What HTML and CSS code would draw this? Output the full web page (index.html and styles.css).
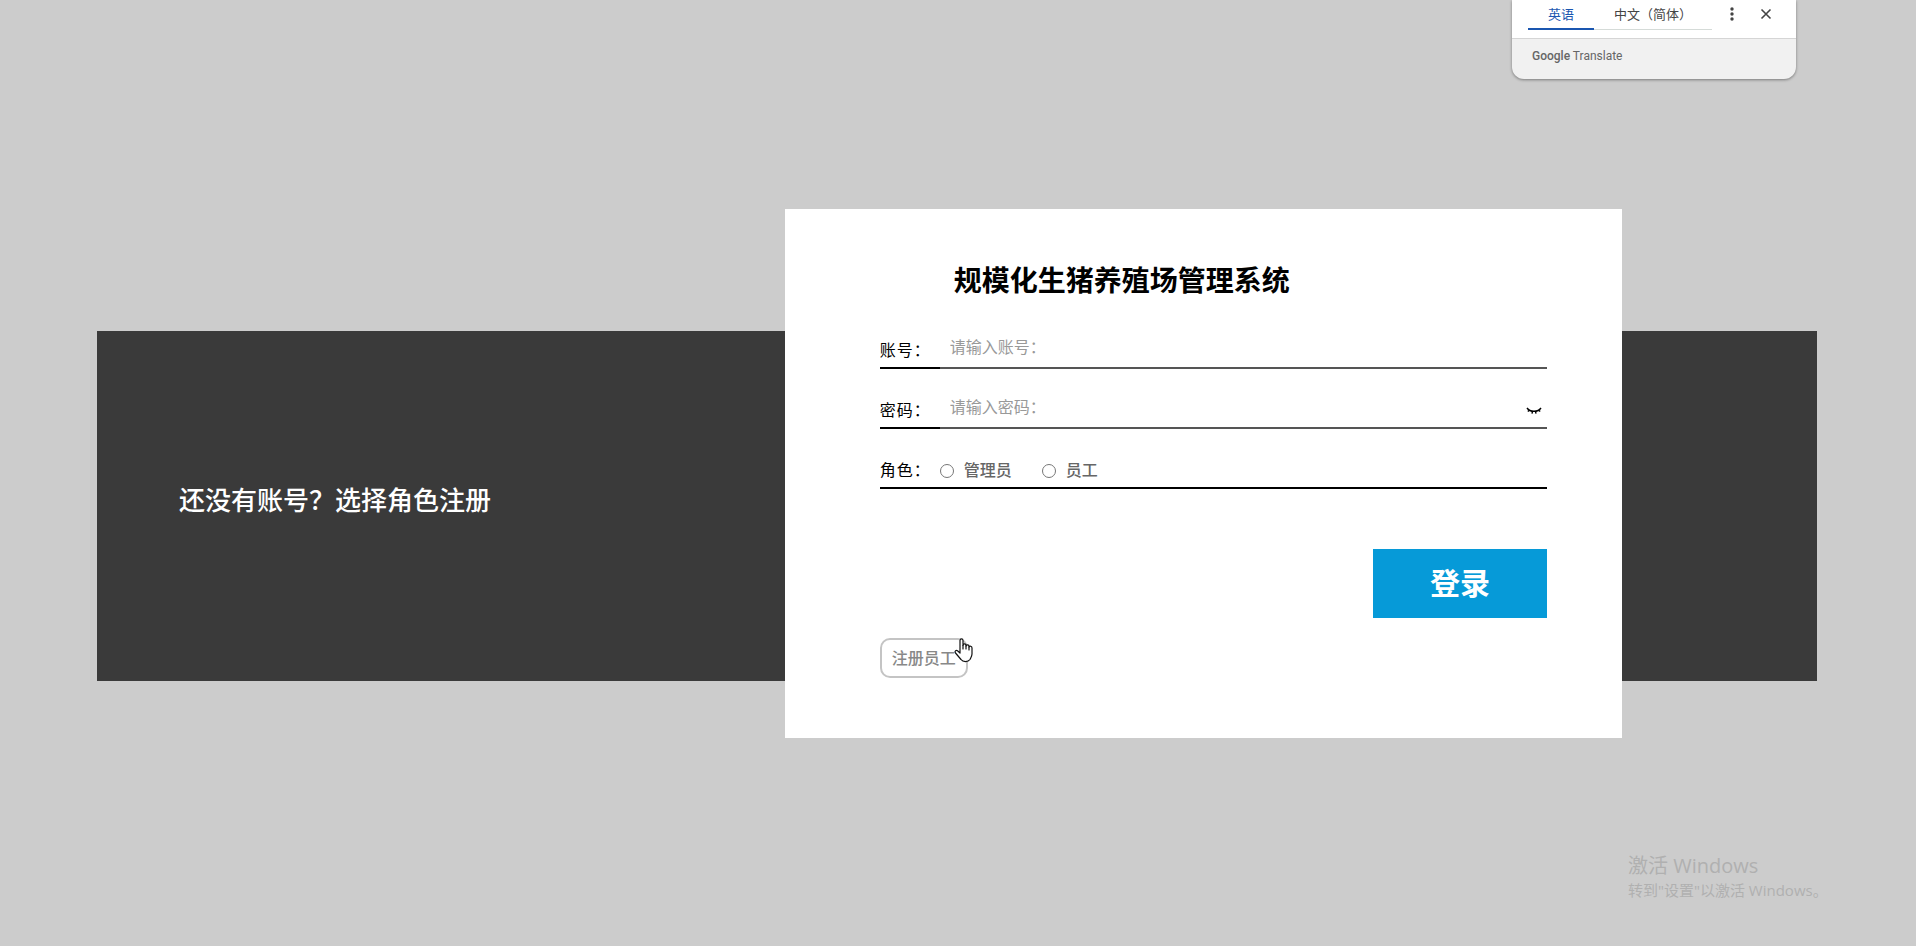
FILE: index.html
```html
<!DOCTYPE html>
<html lang="zh-CN">
<head>
  <meta charset="UTF-8">
  <meta name="viewport" content="width=device-width, initial-scale=1.0">
  <title>规模化生猪养殖场管理系统</title>
  <link rel="stylesheet" href="styles.css">
</head>
<body>
  <main class="container">
    <div class="register-tip">还没有账号？选择角色注册</div>

    <form class="login-form">
      <h1>规模化生猪养殖场管理系统</h1>

      <div class="form-item">
        <label class="label" for="username">账号：</label>
        <input class="text-input" type="text" id="username" placeholder="请输入账号：">
      </div>

      <div class="form-item">
        <label class="label" for="password">密码：</label>
        <input class="text-input" type="password" id="password" placeholder="请输入密码：">
        <button class="eye" type="button" aria-label="显示密码">
          <svg width="16" height="8" viewBox="0 0 16 8" fill="none" stroke="#000" stroke-width="1.4">
            <path d="M1 1C4 5.4 12 5.4 15 1M3.5 3L1.8 4.6M6.5 4.3L6 6.6M9.5 4.3L10 6.6M12.5 3L14.2 4.6"/>
          </svg>
        </button>
      </div>

      <div class="form-item role" role="radiogroup" aria-labelledby="role-label">
        <span class="label" id="role-label">角色：</span>
        <label class="radio"><input type="radio" name="role" value="admin">管理员</label>
        <label class="radio"><input type="radio" name="role" value="staff">员工</label>
      </div>

      <button class="login-btn" type="submit">登录</button>
      <div class="register">
        <button class="register-btn" type="button">注册员工</button>
        <svg class="cursor" width="20" height="25" viewBox="0 0 20 25" fill="#fff" stroke="#111" stroke-width="1.2" stroke-linejoin="round" stroke-linecap="round">
          <path d="M6 14V2.5C6 .3 9 .3 9 2.5V7.5C9.3 5.3 12 5.5 12 7.5V8C12.5 6.5 15 6.5 15 8.5V9C15.7 7.7 18 8 18 10V16C18 18 17 19.5 16 21.5C14 24.2 9 24.2 7 21.5L1.5 15C.3 13.3 2 11.8 3.5 12.8L6 15Z"/>
          <path d="M9 7.5V11M12 8V11M15 9V12"/>
        </svg>
      </div>
    </form>
  </main>

  <!-- 翻译弹窗 -->
  <aside class="translate">
    <div class="translate-top">
      <div class="tabs">
        <button class="tab active" type="button">英语</button>
        <button class="tab" type="button">中文（简体）</button>
      </div>
      <button class="icon-btn" type="button" aria-label="更多">
        <svg width="16" height="16" viewBox="0 0 16 16" fill="#444">
          <circle cx="8" cy="3" r="1.7"/><circle cx="8" cy="8" r="1.7"/><circle cx="8" cy="13" r="1.7"/>
        </svg>
      </button>
      <button class="icon-btn" type="button" aria-label="关闭">
        <svg width="16" height="16" viewBox="0 0 16 16" stroke="#444" stroke-width="1.6">
          <path d="M3.5 3.5L12.5 12.5M12.5 3.5L3.5 12.5"/>
        </svg>
      </button>
    </div>
    <div class="translate-foot"><b>Google</b> Translate</div>
  </aside>

  <div class="watermark">
    <div class="watermark-title">激活 Windows</div>
    <div>转到"设置"以激活 Windows。</div>
  </div>
</body>
</html>
```
FILE: styles.css
```css
* {
  box-sizing: border-box;
}
body {
  margin: 0;
  min-height: 100vh;
  background-color: #ccc;
  font-family: "Noto Sans CJK SC", sans-serif;
  font-size: 16px;
}
button, input {
  font-family: inherit;
}
button {
  padding: 0;
  border: none;
  background: none;
  cursor: pointer;
}
h1 {
  width: 484px;
  margin: 0 0 34px;
  font-size: 28px;
  line-height: 40px;
  text-align: center;
}
.container {
  display: grid;
  grid-template-columns: 45.1% 1fr;
  align-items: center;
  margin: 331px 99px 0 97px;
  padding-right: 195px;
  background-color: #3a3a3a;
}
.register-tip {
  padding: 0 0 15px 82px;
  color: #fff;
  font-size: 26px;
  line-height: 40px;
  font-weight: 500;
}
.login-form {
  display: flex;
  flex-direction: column;
  margin: -122px 0 -57px;
  padding: 50px 75px 60px 95px;
  background-color: #fff;
}
.form-item {
  display: flex;
  position: relative;
  height: 36px;
  margin-bottom: 24px;
}
.label {
  width: 60px;
  border-bottom: 2px solid #000;
  line-height: 32px;
  letter-spacing: 1px;
  white-space: nowrap;
}
.text-input {
  flex: 1;
  min-width: 0;
  padding: 0 40px 8px 10px;
  border: none;
  border-bottom: 2px solid #555;
  outline: none;
  font-size: 16px;
}
.text-input::placeholder {
  color: #999;
}
.eye {
  display: flex;
  position: absolute;
  right: 5px;
  bottom: 14px;
}
.role {
  border-bottom: 2px solid #000;
}
.role .label {
  border-bottom: none;
}
.radio {
  display: flex;
  align-items: center;
  margin-right: 30px;
  padding-bottom: 2px;
  color: #666;
  font-weight: 500;
}
.radio input {
  width: 14px;
  height: 14px;
  margin: 4px 10px 0 0;
}
.login-btn {
  align-self: flex-end;
  width: 174px;
  height: 69px;
  margin: 36px 0 20px;
  padding-bottom: 5px;
  background-color: #069ad8;
  color: #fff;
  font-size: 30px;
  font-weight: bold;
}
.register {
  position: relative;
  width: 88px;
  height: 40px;
}
.register-btn {
  width: 100%;
  height: 100%;
  padding-bottom: 3px;
  border: 2px solid #c4c4c4;
  border-radius: 10px;
  color: #888;
  font-size: 16px;
  font-weight: 500;
}
.cursor {
  position: absolute;
  top: 0;
  right: -6px;
}

.translate {
  position: absolute;
  top: 0;
  right: 120px;
  width: 284px;
  background-color: #f1f1f1;
  border-radius: 0 0 12px 12px;
  box-shadow: 0 1px 3px rgba(0,0,0,0.4);
  overflow: hidden;
}
.translate-top {
  display: flex;
  align-items: flex-start;
  height: 39px;
  padding-left: 16px;
  background-color: #fff;
  border-bottom: 1px solid #d5d5d5;
}
.tabs {
  display: flex;
  width: 184px;
  border-bottom: 1px solid #d5dbd8;
}
.tab {
  flex: 1;
  height: 29px;
  padding-bottom: 2px;
  color: #444;
  font-size: 13px;
  white-space: nowrap;
}
.tab.active {
  flex: 0 0 66px;
  margin-bottom: -1px;
  height: 30px;
  border-bottom: 2px solid #1a56b0;
  color: #1a56b0;
}
.icon-btn {
  display: flex;
  align-items: center;
  height: 28px;
  margin-left: 12px;
}
.icon-btn + .icon-btn {
  margin-left: 18px;
}
.translate-foot {
  height: 40px;
  padding: 7px 20px;
  color: #666;
  font-family: Roboto, sans-serif;
  font-size: 12px;
  line-height: 20px;
}
.translate-foot b {
  font-weight: 500;
}

.watermark {
  position: absolute;
  right: 93px;
  bottom: 44px;
  width: 195px;
  color: #b0b0b0;
  font-family: "Open Sans", "Noto Sans CJK SC", sans-serif;
  font-size: 15px;
  line-height: 24px;
  white-space: nowrap;
}
.watermark-title {
  font-size: 20px;
}
```
